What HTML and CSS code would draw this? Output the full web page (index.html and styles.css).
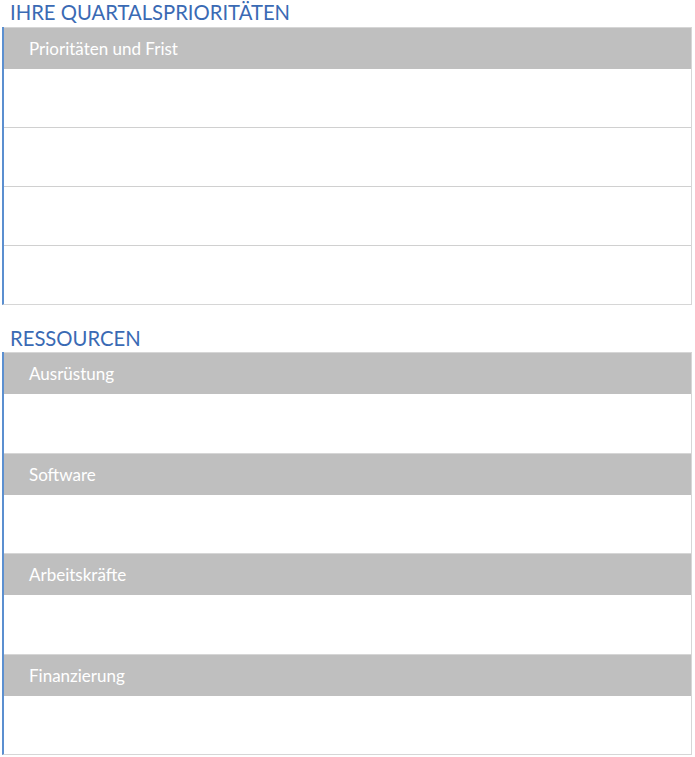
FILE: index.html
```html
<!DOCTYPE html>
<html lang="de">
<head>
    <meta charset="UTF-8">
    <title>Quartalsprioritäten</title>
    <link rel="stylesheet" href="styles.css">
</head>
<body>

<div class="page">
    <!-- Prioritäten -->
    <h2 class="section-title">IHRE QUARTALSPRIORITÄTEN</h2>
    <div class="block">
        <div class="block-head">Prioritäten und Frist</div>
        <div class="block-row"></div>
        <div class="block-row"></div>
        <div class="block-row"></div>
        <div class="block-row last"></div>
    </div>

    <!-- Ressourcen -->
    <h2 class="section-title second">RESSOURCEN</h2>
    <div class="block">
        <div class="block-head">Ausrüstung</div>
        <div class="block-row plain"></div>
        <div class="block-head">Software</div>
        <div class="block-row plain short"></div>
        <div class="block-head">Arbeitskräfte</div>
        <div class="block-row plain"></div>
        <div class="block-head">Finanzierung</div>
        <div class="block-row last"></div>
    </div>
</div>

</body>
</html>
```

FILE: styles.css
```css
body {
    font-family: Lato, "Open Sans", sans-serif;
    background-color: #fff;
    margin: 0;
    padding: 0;
}

.page {
    padding: 0 3px 0 2px;
}

.section-title {
    font-size: 20.25px;
    font-weight: normal;
    color: #3a6ab4;
    margin: 0;
    padding: 0 0 0 8px;
    height: 27px;
    line-height: 25px;
}

.section-title.second {
    margin-top: 19px;
    height: 28px;
    line-height: 29px;
}

.block {
    border-left: 2px solid #5b8fd0;
    border-right: 1px solid #d6d6d6;
    border-bottom: 1px solid #d6d6d6;
    background-color: #fff;
}

.block-head {
    background-color: #bfbfbf;
    color: #fff;
    font-size: 17px;
    height: 42px;
    line-height: 41px;
    padding-left: 25px;
    border-top: 1px solid #d6d6d6;
    box-sizing: border-box;
}

.block-row {
    height: 58px;
    border-bottom: 1px solid #d0d0d0;
}

.block-row.plain {
    border-bottom: none;
    height: 59px;
}

.block-row.plain.short {
    height: 58px;
}

.block-row.last {
    border-bottom: none;
    height: 58px;
}
```
